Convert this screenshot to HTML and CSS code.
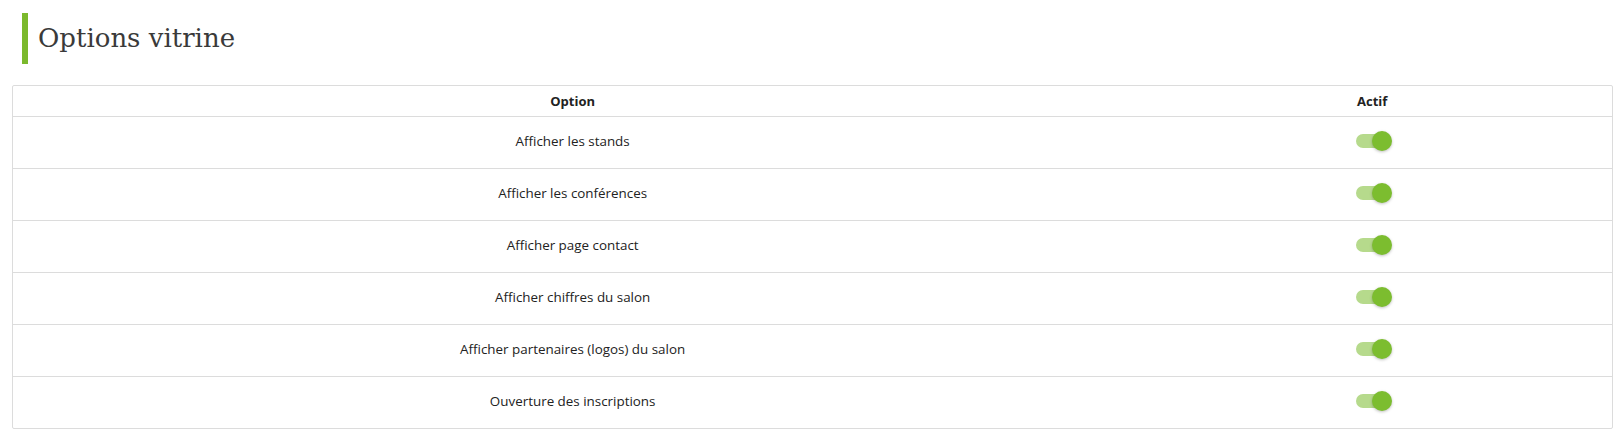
FILE: index.html
```html
<!DOCTYPE html>
<html lang="fr">
<head>
<meta charset="utf-8">
<title>Options vitrine</title>
<link rel="stylesheet" href="styles.css">
</head>
<body>
<div class="page">
  <h1 class="title">Options vitrine</h1>
  <div class="box">
    <table class="opts">
      <thead>
        <tr><th class="c-opt">Option</th><th class="c-act">Actif</th></tr>
      </thead>
      <tbody>
        <tr><td>Afficher les stands</td><td><span class="toggle"><span class="knob"></span></span></td></tr>
        <tr><td>Afficher les conférences</td><td><span class="toggle"><span class="knob"></span></span></td></tr>
        <tr><td>Afficher page contact</td><td><span class="toggle"><span class="knob"></span></span></td></tr>
        <tr><td>Afficher chiffres du salon</td><td><span class="toggle"><span class="knob"></span></span></td></tr>
        <tr><td>Afficher partenaires (logos) du salon</td><td><span class="toggle"><span class="knob"></span></span></td></tr>
        <tr><td>Ouverture des inscriptions</td><td><span class="toggle"><span class="knob"></span></span></td></tr>
      </tbody>
    </table>
  </div>
</div>
</body>
</html>
```
FILE: styles.css
```css
html, body {
  margin: 0;
  padding: 0;
  background: #fff;
}
.page {
  padding: 13px 8px 0 12px;
}
.title {
  margin: 0 0 21px 10px;
  padding-left: 10px;
  border-left: 6px solid #7bb92c;
  height: 51px;
  line-height: 51px;
  font-family: "DejaVu Serif", "Liberation Serif", serif;
  font-weight: 300;
  font-size: 26px;
  color: #3a3a3a;
}
.box {
  border: 1px solid #dcdcdc;
  border-radius: 2px;
  width: 1599px;
}
.opts {
  width: 100%;
  border-collapse: collapse;
  font-family: "Open Sans", "Noto Sans", sans-serif;
  color: #222;
}
.opts th {
  height: 30px;
  font-size: 13px;
  font-weight: 700;
  text-align: center;
  padding: 0;
  border-bottom: 1px solid #dcdcdc;
}
.c-opt { width: 70%; }
.c-act { width: 30%; }
.opts td {
  height: 48px;
  font-size: 13.4px;
  text-align: center;
  padding: 0 0 3px;
  border-bottom: 1px solid #dcdcdc;
  vertical-align: middle;
}
.opts tbody tr:last-child td {
  border-bottom: none;
}
.toggle {
  display: block;
  position: relative;
  left: -2px;
  width: 28px;
  height: 14px;
  margin: 0 auto;
  border-radius: 7px;
  background: #b6da8c;
}
.knob {
  position: absolute;
  left: 16px;
  top: -3px;
  width: 20px;
  height: 20px;
  border-radius: 50%;
  background: #7cbd2f;
  box-shadow: 0 1px 3px rgba(0,0,0,0.25);
}
```
